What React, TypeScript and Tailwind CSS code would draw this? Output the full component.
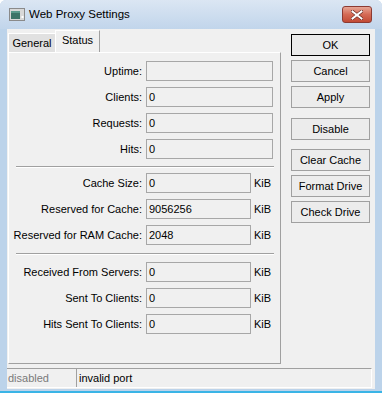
import React from 'react';

const font = { fontFamily: '"Liberation Sans", Arial, sans-serif' };

function Field({ label, value, unit, wide }: { label: string; value: string; unit?: boolean; wide?: boolean }) {
  return (
    <div className="flex h-[20px] items-center">
      <div className="w-[137px] pr-[4px] text-right text-[11px] text-black">{label}</div>
      <div
        className={`h-[20px] ${wide ? 'w-[127px]' : 'w-[105px]'} border border-[#a7a7a7] bg-[#f0f0f0] pl-[2px] text-[11px] leading-[18px] text-black`}
      >
        {value}
      </div>
      {unit && <div className="ml-[3px] text-[11px] text-black">KiB</div>}
    </div>
  );
}

function Separator() {
  return <div className="ml-[7px] w-[258px] border-t border-b border-t-[#a0a0a0] border-b-white" />;
}

function Btn({ children, primary }: { children: React.ReactNode; primary?: boolean }) {
  return (
    <div
      className={`flex h-[22px] w-[79px] items-center justify-center border text-[11px] text-black ${
        primary ? 'border-black bg-[#eaeaea]' : 'border-[#a0a0a0] bg-[#ececec]'
      }`}
    >
      {children}
    </div>
  );
}

export default function App() {
  return (
    <div className="flex h-[393px] w-[382px] flex-col rounded-t-[6px] bg-[#bcd3ea]" style={font}>
      {/* title bar */}
      <div className="flex h-[29px] items-center rounded-t-[6px] bg-gradient-to-b from-[#dbe6f3] to-[#c1d5eb] pl-[9px] pr-[10px]">
        <svg width="16" height="13" viewBox="0 0 16 13">
          <rect x="0.5" y="0.5" width="15" height="12" fill="#d8d8d8" stroke="#8a8a8a" />
          <rect x="2" y="3" width="9" height="8" fill="#3c7468" />
          <rect x="2" y="3" width="9" height="2" fill="#5a9a8c" />
          <rect x="12.5" y="8" width="2" height="2" fill="#ffffff" />
        </svg>
        <span className="ml-[4px] text-[11.5px] text-black">Web Proxy Settings</span>
        <div className="ml-auto flex h-[17px] w-[30px] items-center justify-center rounded-[3px] border border-[#8c3a32] bg-gradient-to-b from-[#e6a595] via-[#d46a55] to-[#c24a35]">
          <svg width="12" height="10" viewBox="0 0 12 10">
            <path d="M1.5 1.5 L10.5 8.5 M10.5 1.5 L1.5 8.5" stroke="#5a1f18" strokeWidth="3.2" strokeLinecap="square" />
            <path d="M1.5 1.5 L10.5 8.5 M10.5 1.5 L1.5 8.5" stroke="#ffffff" strokeWidth="2" strokeLinecap="square" />
          </svg>
        </div>
      </div>

      {/* client */}
      <div className="mx-[7px] flex h-[360px] flex-col bg-[#f0f0f0]">
        <div className="flex">
          <div className="ml-[1px] flex w-[273px] flex-col">
            {/* tabs */}
            <div className="flex h-[23px] items-end pt-[1px]">
              <div className="flex h-[19px] w-[47px] items-center justify-center border-l border-t border-white bg-[#e1e1e1] text-[11px] text-black">
                General
              </div>
              <div className="flex h-[22px] w-[45px] items-center justify-center border-l border-r border-t border-l-white border-r-[#a0a0a0] border-t-white bg-[#f0f0f0] pb-[2px] text-[11px] text-black">
                Status
              </div>
            </div>
            {/* panel */}
            <div className="flex h-[312px] flex-col border-b border-l border-r border-t border-b-[#a0a0a0] border-l-white border-r-[#a0a0a0] border-t-white pt-[8px]">
              <div className="flex flex-col gap-[6px]">
                <Field label="Uptime:" value="" wide />
                <Field label="Clients:" value="0" wide />
                <Field label="Requests:" value="0" wide />
                <Field label="Hits:" value="0" wide />
              </div>
              <div className="mt-[7px]">
                <Separator />
              </div>
              <div className="mt-[5px] flex flex-col gap-[6px]">
                <Field label="Cache Size:" value="0" unit />
                <Field label="Reserved for Cache:" value="9056256" unit />
                <Field label="Reserved for RAM Cache:" value="2048" unit />
              </div>
              <div className="mt-[8px]">
                <Separator />
              </div>
              <div className="mt-[7px] flex flex-col gap-[6px]">
                <Field label="Received From Servers:" value="0" unit />
                <Field label="Sent To Clients:" value="0" unit />
                <Field label="Hits Sent To Clients:" value="0" unit />
              </div>
            </div>
          </div>

          {/* buttons */}
          <div className="ml-[10px] mt-[5px] flex flex-col">
            <div className="flex flex-col gap-[4px]">
              <Btn primary>OK</Btn>
              <Btn>Cancel</Btn>
              <Btn>Apply</Btn>
            </div>
            <div className="mt-[10px]">
              <Btn>Disable</Btn>
            </div>
            <div className="mt-[9px] flex flex-col gap-[4px]">
              <Btn>Clear Cache</Btn>
              <Btn>Format Drive</Btn>
              <Btn>Check Drive</Btn>
            </div>
          </div>
        </div>

        {/* status bar */}
        <div className="mt-[4px] mr-[3px] flex h-[20px] border-b border-r border-t border-b-white border-r-white border-t-[#a0a0a0]">
          <div className="w-[69px] pl-[1px] text-[11px] leading-[18px] text-[#7a7a7a]">disabled</div>
          <div className="flex-1 border-l border-[#a0a0a0] pl-[2px] text-[11px] leading-[18px] text-black">invalid port</div>
        </div>
      </div>

      <div className="mt-auto h-[2px] bg-[#3ab4e6]" />
    </div>
  );
}
